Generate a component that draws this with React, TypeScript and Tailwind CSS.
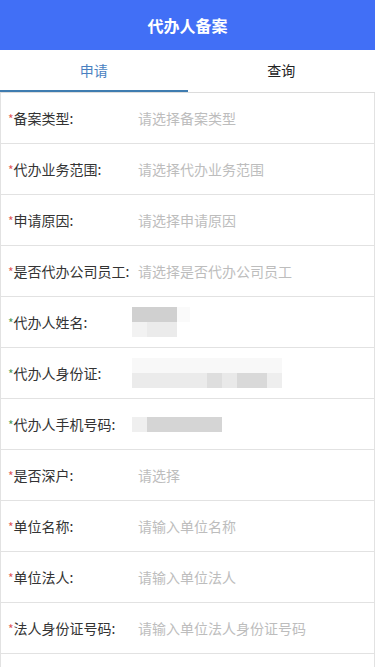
import React, { useState } from 'react';

type Field = {
    label: string;
    placeholder?: string;
    star: 'red' | 'green';
    blur?: 'name' | 'id' | 'phone';
};

const fields: Field[] = [
    { label: '备案类型', placeholder: '请选择备案类型', star: 'red' },
    { label: '代办业务范围', placeholder: '请选择代办业务范围', star: 'red' },
    { label: '申请原因', placeholder: '请选择申请原因', star: 'red' },
    { label: '是否代办公司员工', placeholder: '请选择是否代办公司员工', star: 'red' },
    { label: '代办人姓名', star: 'green', blur: 'name' },
    { label: '代办人身份证', star: 'green', blur: 'id' },
    { label: '代办人手机号码', star: 'green', blur: 'phone' },
    { label: '是否深户', placeholder: '请选择', star: 'red' },
    { label: '单位名称', placeholder: '请输入单位名称', star: 'red' },
    { label: '单位法人', placeholder: '请输入单位法人', star: 'red' },
    { label: '法人身份证号码', placeholder: '请输入单位法人身份证号码', star: 'red' },
    { label: '', star: 'red' },
];

// mosaic blocks standing in for the blurred personal data
const NameMosaic = () => (
    <div className="flex flex-col -ml-[6px]">
        <div className="flex h-[15px]">
            <div className="w-[45px] bg-[#d0d0d0]" />
            <div className="w-[13px] bg-[#fafafa]" />
        </div>
        <div className="flex h-[15px]">
            <div className="w-[15px] bg-[#f2f2f2]" />
            <div className="w-[30px] bg-[#ebebeb]" />
        </div>
    </div>
);

const IdMosaic = () => (
    <div className="flex flex-col -ml-[6px]">
        <div className="h-[15px] w-[150px] bg-[#f8f8f8]" />
        <div className="flex h-[15px]">
            <div className="w-[75px] bg-[#ebebeb]" />
            <div className="w-[15px] bg-[#dedede]" />
            <div className="w-[15px] bg-[#e9e9e9]" />
            <div className="w-[30px] bg-[#d9d9d9]" />
            <div className="w-[15px] bg-[#eeeeee]" />
        </div>
    </div>
);

const PhoneMosaic = () => (
    <div className="flex h-[15px] -ml-[6px]">
        <div className="w-[15px] bg-[#efefef]" />
        <div className="w-[75px] bg-[#d5d5d5]" />
    </div>
);

export default function App() {
    const [tab, setTab] = useState(0);

    return (
        <div className="bg-white font-['Noto_Sans_CJK_SC',sans-serif] overflow-hidden h-[667px]">
            <header className="h-[50px] bg-[#416ff6] flex items-center justify-center">
                <h1 className="text-white text-[16px] font-bold">代办人备案</h1>
            </header>

            <div className="flex h-[43px] border-b border-[#dcdcdc]">
                {['申请', '查询'].map((t, i) => (
                    <button
                        key={t}
                        onClick={() => setTab(i)}
                        className={`flex-1 flex items-center justify-center text-[14px] border-b-2 ${tab === i ? 'text-[#4a7fc1] border-[#3f7cb0]' : 'text-[#222] border-transparent'}`}
                    >
                        {t}
                    </button>
                ))}
            </div>

            <div className="border-x border-[#e2e2e2]">
                {fields.map((f, i) => (
                    <div key={i} className="h-[51px] flex items-center border-b border-[#e2e2e2] pl-[7px] text-[14px]">
                        {f.label && (
                            <>
                                <div className="w-[130px] shrink-0 text-[#333] whitespace-nowrap">
                                    <span className={`text-[12px] ${f.star === 'red' ? 'text-[#e05a5a]' : 'text-[#4f9a5a]'}`}>*</span>
                                    {f.label}:
                                </div>
                                {f.placeholder && <span className="text-[#bdbdbd]">{f.placeholder}</span>}
                                {f.blur === 'name' && <NameMosaic />}
                                {f.blur === 'id' && <IdMosaic />}
                                {f.blur === 'phone' && <PhoneMosaic />}
                            </>
                        )}
                    </div>
                ))}
            </div>
        </div>
    );
}
